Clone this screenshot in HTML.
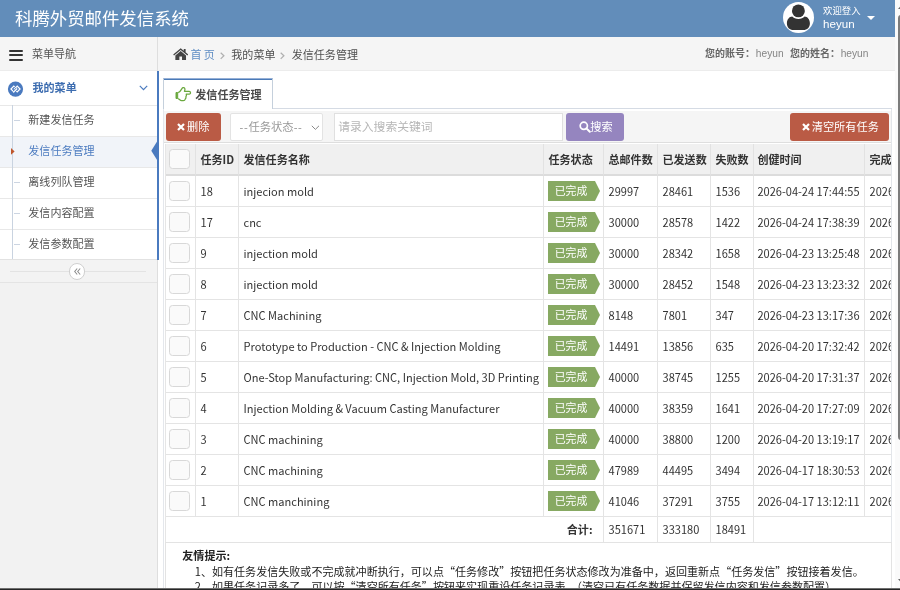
<!DOCTYPE html>
<html lang="zh-CN">
<head>
<meta charset="utf-8">
<title>科腾外贸邮件发信系统</title>
<style>
*{box-sizing:border-box;}
html,body{margin:0;padding:0;}
body{width:900px;height:590px;overflow:hidden;position:relative;background:#fff;
  font-family:"Liberation Sans","Noto Sans CJK SC",sans-serif;font-size:11.05px;color:#393939;}
#page{will-change:transform;position:absolute;left:0;top:0;width:895px;height:588px;overflow:hidden;background:#fff;}
.a{position:absolute;white-space:nowrap;}
/* header */
#navbar{position:absolute;left:0;top:0;width:895px;height:37px;background:#628dba;}
#navbar .brand{left:15px;top:0;height:37px;line-height:38px;color:#fff;font-size:17.4px;}
#navbar .avatar{left:783px;top:2px;width:31px;height:31px;border-radius:50%;background:#fff;overflow:hidden;}
#navbar .welcome{left:823px;top:5px;color:#fff;font-size:9.4px;line-height:12px;}
#navbar .uname{left:823px;top:15.5px;color:#fff;font-size:11.6px;line-height:16px;}
#navbar .caret{left:867.2px;top:15.6px;width:0;height:0;border-left:4.4px solid transparent;border-right:4.4px solid transparent;border-top:4.6px solid #fff;}
/* sidebar */
#sidebar{position:absolute;left:0;top:37px;width:158px;height:551px;background:#f2f2f2;border-right:1px solid #dedede;}
#sidebar .navhead{left:0;top:0;width:157px;height:34px;background:#f5f5f5;border-bottom:1px solid #ececec;}
#sidebar .navhead .txt{left:32px;top:0;line-height:35px;color:#555;font-size:11px}
#sidebar .burger{left:9px;top:13px;width:13.5px;height:11px;}
#sidebar .burger i{display:block;height:2px;background:#333;margin-bottom:2.4px;border-radius:1px;}
#sidebar .mymenu{left:0;top:34px;width:157px;height:34px;background:#fff;}
#sidebar .mymenu .txt{left:32.5px;top:0;line-height:35px;font-weight:bold;color:#3d6db0;}
#sidebar .sub{left:0;width:157px;height:31px;background:#fff;border-top:1px solid #e8e8e8;}
#sidebar .sub .txt{left:28.3px;top:0;line-height:29px;color:#555;}
#sidebar .sub.active{background:#f1f4f9;}
#sidebar .sub.active .txt{color:#4d7cc0;}
#sidebar .sub .dash{left:14px;top:14px;width:6px;height:1px;background:#ccd5e2;}
#sidebar .vline{left:12px;top:68px;width:1px;height:154px;background:#c9d3e0;}
#sidebar .rblue{left:157px;top:34px;width:2px;height:189px;background:#4a7abf;}
#sidebar .collapse{left:0;top:222px;width:157px;height:24px;background:#f3f3f3;border-top:1px solid #e2e2e2;border-bottom:1px solid #e4e4e4;}
/* breadcrumb */
#crumbs{position:absolute;left:158px;top:37px;width:737px;height:34px;background:#f5f5f5;border-bottom:1px solid #ececec;}
#crumbs .t{top:0;line-height:36px;}
/* tabs */
#tabline{left:163px;top:108px;width:729px;height:1px;background:#d5dbe4;}
#tab{left:162.5px;top:78px;width:110px;height:31px;background:#fff;border:1px solid #c5d0dc;border-top:1px solid #96b0d6;border-bottom:none;box-shadow:inset 0 1px 0 #4a7ab8;}
#tab .txt{left:31.8px;top:1.4px;line-height:30px;font-weight:bold;color:#4a4a4a;}
/* toolbar */
#toolbar{left:163.5px;top:111px;width:727.5px;height:32px;background:#f5f5f5;border-bottom:1px solid #dedede;}
.btn{position:absolute;color:#fff;border-radius:3px;white-space:nowrap;top:112.5px;height:28.5px;line-height:28.5px;font-size:11.2px;}
.btn .a{top:0;}
/* table */
#grid{left:165px;top:144px;width:725.5px;height:399px;overflow:hidden;font-family:"Noto Sans CJK SC","Liberation Sans",sans-serif;font-size:11.05px;color:#333;border-left:1px solid #e6e6e6;}
table{border-collapse:separate;border-spacing:0;table-layout:fixed;width:769px;margin-left:-1px;}
td,th{border-left:1px solid #e4e4e4;border-bottom:1px solid #e4e4e4;height:31px;padding:0 0 0 4.5px;text-align:left;white-space:nowrap;overflow:hidden;vertical-align:middle;line-height:29px;}
th{font-weight:bold;background:#f0f0f0;color:#333;height:32px;border-bottom:2px solid #dcdcdc;border-left-color:#e2e2e2;}
.cb{display:block;width:20.4px;height:20.4px;border:1px solid #d8d8d8;border-radius:3.5px;background:#fafafa;margin-left:-1.4px;}
.tag{display:block;position:relative;width:46.8px;height:20.4px;line-height:19.5px;background:#87a962;color:#fff;padding:0 0 0 6.6px;font-size:10.9px;margin-left:-0.4px;}
.tag:after{content:"";position:absolute;right:-5px;top:0;border-left:5px solid #87a962;border-top:10.2px solid transparent;border-bottom:10.2px solid transparent;}
td:nth-child(8),th:nth-child(8){padding-left:3.4px}
tr.total td{height:25px;line-height:25px;}
/* tips */
#tips{left:164.5px;top:542px;width:727px;height:60px;border:1px solid #e3e3e3;font-family:"Noto Sans CJK SC","Liberation Sans",sans-serif;color:#222;}
/* scrollbar */
#sb{left:895px;top:0;width:5px;height:588px;background:#fafafa;}
#sb .thumb{left:3.3px;top:15.3px;width:8px;height:424.3px;background:#7c7c7c;border-radius:3px 0 0 3px;}
#bottomline{left:0;top:588px;width:900px;height:2px;background:#262626;border-top:1px solid #6f6f6f;}
</style>
</head>
<body>
<div id="page">

<div id="navbar">
  <div class="a brand">科腾外贸邮件发信系统</div>
  <div class="a avatar"><svg width="31" height="31" viewBox="0 0 31 31"><circle cx="15.4" cy="8.9" r="6.45" fill="#333"/><path d="M9.2 14.6 C6.5 14.8 4 17.2 3.9 21.2 C3.9 25.2 6.5 28 10.5 28 L20.3 28 C24.3 28 26.9 25.2 26.9 21.2 C26.8 17.2 24.3 14.8 21.6 14.6 C20.2 16.1 18 17 15.4 17 C12.8 17 10.6 16.1 9.2 14.6 Z" fill="#333"/></svg></div>
  <div class="a welcome">欢迎登入</div>
  <div class="a uname">heyun</div>
  <div class="a caret"></div>
</div>

<div id="sidebar">
  <div class="a navhead"><div class="a burger"><i></i><i></i><i></i></div><div class="a txt">菜单导航</div></div>
  <div class="a mymenu">
    <svg class="a" style="left:7px;top:10px" width="17" height="17" viewBox="0 0 17 17"><circle cx="8.5" cy="8.1" r="7.6" fill="#4a7abf"/><g transform="translate(0.5,0.1)" fill="none" stroke="#fff" stroke-width="1.25" stroke-linejoin="miter"><path d="M6.3 5.05 L3.45 7.9 L6.3 10.75 L9.15 7.9 Z"/><path d="M9.7 5.05 L6.85 7.9 L9.7 10.75 L12.55 7.9 Z" stroke="#4a7abf" stroke-width="2.6"/><path d="M9.7 5.05 L6.85 7.9 L9.7 10.75 L12.55 7.9 Z"/><path d="M9.15 7.9 L6.3 10.75" stroke="#4a7abf" stroke-width="2.6"/><path d="M9.6 7.45 L6.3 10.75 L5.8 10.25"/></g></svg>
    <div class="a txt">我的菜单</div>
    <svg class="a" style="left:138.5px;top:13.8px" width="9" height="6" viewBox="0 0 9 6"><path d="M0.8 0.8 L4.5 4.6 L8.2 0.8" fill="none" stroke="#4a7abf" stroke-width="1.2"/></svg>
  </div>
  <div class="a sub" style="top:68px"><span class="a dash"></span><div class="a txt">新建发信任务</div></div>
  <div class="a sub active" style="top:99px"><div class="a txt">发信任务管理</div></div>
  <div class="a sub" style="top:130px"><span class="a dash"></span><div class="a txt">离线列队管理</div></div>
  <div class="a sub" style="top:161px"><span class="a dash"></span><div class="a txt">发信内容配置</div></div>
  <div class="a sub" style="top:192px"><span class="a dash"></span><div class="a txt">发信参数配置</div></div>
  <div class="a vline"></div>
  <svg class="a" style="left:10.5px;top:110.5px" width="4" height="7" viewBox="0 0 4 7"><path d="M0 0 L3.6 3.4 L0 6.8 Z" fill="#c0562b"/></svg>
  <svg class="a" style="left:150.5px;top:102.5px" width="7" height="22" viewBox="0 0 7 22"><path d="M7 0 L0.3 10.8 L7 21.6 Z" fill="#4a7abf"/></svg>
  <div class="a rblue"></div>
  <div class="a collapse">
    <div class="a" style="left:9.5px;top:11px;width:136px;height:1px;background:#e3e3e3"></div>
    <div class="a" style="left:68.5px;top:3px;width:16.5px;height:16.5px;border-radius:50%;border:1px solid #d0d0d0;background:#fff"></div>
    <svg class="a" style="left:73.5px;top:8.2px" width="7" height="7" viewBox="0 0 7 7"><path d="M3.2 0.5 L0.7 3.5 L3.2 6.5 M6.2 0.5 L3.7 3.5 L6.2 6.5" fill="none" stroke="#8c8c8c" stroke-width="1.05"/></svg>
  </div>
</div>

<div id="crumbs">
  <svg class="a" style="left:14.5px;top:11px" width="15.4" height="12.4" viewBox="0 0 15 12"><path d="M7.5 0.3 L0.2 6.3 L1 7.2 L7.5 1.9 L14 7.2 L14.8 6.3 L12.3 4.2 L12.3 1 L10.5 1 L10.5 2.7 Z" fill="#444"/><path d="M7.5 2.9 L2.3 7.2 L2.3 11.7 L6.2 11.7 L6.2 8.3 L8.8 8.3 L8.8 11.7 L12.7 11.7 L12.7 7.2 Z" fill="#444"/></svg>
  <div class="a t" style="left:32.6px;color:#5f8dc4;word-spacing:-1px">首 页</div>
  <svg class="a" style="left:62px;top:14.5px" width="5" height="8" viewBox="0 0 5 8"><path d="M0.7 0.7 L3.9 3.8 L0.7 6.9" fill="none" stroke="#b0b0b0" stroke-width="1.25"/></svg>
  <div class="a t" style="left:73.3px;color:#4f4f4f">我的菜单</div>
  <svg class="a" style="left:122.3px;top:14.5px" width="5" height="8" viewBox="0 0 5 8"><path d="M0.7 0.7 L3.9 3.8 L0.7 6.9" fill="none" stroke="#b0b0b0" stroke-width="1.25"/></svg>
  <div class="a t" style="left:133.7px;color:#4f4f4f">发信任务管理</div>
  <div class="a t" style="left:547px;color:#666;font-weight:bold;font-size:10px;line-height:34.4px">您的账号：</div>
  <div class="a t" style="left:597.8px;color:#858585;font-size:10.2px;line-height:34.4px">heyun</div>
  <div class="a t" style="left:632px;color:#666;font-weight:bold;font-size:10px;line-height:34.4px">您的姓名：</div>
  <div class="a t" style="left:682.7px;color:#858585;font-size:10.2px;line-height:34.4px">heyun</div>
</div>

<div class="a" id="tabline"></div>
<div class="a" style="left:162.5px;top:109px;width:1px;height:480px;background:#e4e7ec"></div>
<div class="a" style="left:891px;top:109px;width:1px;height:480px;background:#e3e6ea"></div>
<div class="a" id="tab">
  <svg class="a" style="left:11.3px;top:7.7px" width="17" height="15" viewBox="0 0 17 15"><path d="M1 5.5 L2.7 5.5 L2.7 11.5 L1 11.5 Z" fill="#6aa83e" stroke="#6aa83e" stroke-width="1"/><path d="M3.2 5.6 C5.2 4.8 6.4 2.6 7.2 1.2 C7.9 0.2 9.6 0.5 9.9 1.8 C10.1 2.8 9.7 3.6 9.4 4.3 L14.2 4.3 C15.9 4.3 16 7 14.2 7 L11.2 7 C11.6 8.2 11.3 9.2 10.9 9.7 C11.1 11 10.6 11.9 10.1 12.3 C10 13.3 9.2 13.7 8.3 13.7 L6.6 13.7 C5.2 13.7 4.4 12.2 3.2 11.6" fill="none" stroke="#6aa83e" stroke-width="1.25" stroke-linejoin="round"/></svg>
  <div class="a txt">发信任务管理</div>
</div>
<div class="a" id="toolbar"></div>
<div class="btn" style="left:166px;width:55px;background:#ba5b45;"><svg class="a" style="left:10.8px;top:10.3px" width="8" height="8" viewBox="0 0 8 8"><path d="M1 1 L7 7 M7 1 L1 7" stroke="#fff" stroke-width="2.2" fill="none"/></svg><span class="a" style="left:21px">删除</span></div>
<div class="a" style="left:230px;top:112.5px;width:92.5px;height:28.5px;background:#fff;border:1px solid #e3e3e3;border-radius:2px;">
  <div class="a" style="left:8.5px;top:0;line-height:27.5px;font-size:11.3px;color:#9a9a9a"><span style="letter-spacing:0.7px">--</span>任务状态<span style="letter-spacing:0.7px">--</span></div>
  <svg class="a" style="left:80px;top:11px" width="9" height="6" viewBox="0 0 9 6"><path d="M0.8 0.8 L4.4 4.4 L8 0.8" fill="none" stroke="#888" stroke-width="1"/></svg>
</div>
<div class="a" style="left:333.5px;top:112.5px;width:229.5px;height:28.5px;background:#fff;border:1px solid #e0e0e0;">
  <div class="a" style="left:3.7px;top:0;line-height:27.6px;font-size:11.8px;color:#b6b6b6">请录入搜索关键词</div>
</div>
<div class="btn" style="left:565.5px;width:58px;background:#9585bf;">
  <svg class="a" style="left:13px;top:8.5px" width="12" height="12" viewBox="0 0 12 12"><circle cx="4.8" cy="4.8" r="3.6" fill="none" stroke="#fff" stroke-width="1.7"/><path d="M7.4 7.4 L10.8 10.8" stroke="#fff" stroke-width="2" stroke-linecap="round"/></svg>
  <span class="a" style="left:24.7px">搜索</span></div>
<div class="btn" style="left:790px;width:99.3px;background:#ba5b45;"><svg class="a" style="left:11.6px;top:10.3px" width="8" height="8" viewBox="0 0 8 8"><path d="M1 1 L7 7 M7 1 L1 7" stroke="#fff" stroke-width="2.2" fill="none"/></svg><span class="a" style="left:21.7px">清空所有任务</span></div>

<div class="a" id="grid">
<table>
<colgroup><col style="width:30px"><col style="width:43px"><col style="width:305px"><col style="width:60px"><col style="width:54px"><col style="width:53px"><col style="width:43px"><col style="width:111px"><col style="width:70px"></colgroup>
<tr><th class="c0"><span class="cb"></span></th><th>任务ID</th><th>发信任务名称</th><th>任务状态</th><th>总邮件数</th><th>已发送数</th><th>失败数</th><th>创健时间</th><th>完成时间</th></tr>
<tr><td class="c0"><span class="cb"></span></td><td>18</td><td>injecion mold</td><td><span class="tag">已完成</span></td><td>29997</td><td>28461</td><td>1536</td><td>2026-04-24 17:44:55</td><td>2026-04-25</td></tr>
<tr><td class="c0"><span class="cb"></span></td><td>17</td><td>cnc</td><td><span class="tag">已完成</span></td><td>30000</td><td>28578</td><td>1422</td><td>2026-04-24 17:38:39</td><td>2026-04-25</td></tr>
<tr><td class="c0"><span class="cb"></span></td><td>9</td><td>injection mold</td><td><span class="tag">已完成</span></td><td>30000</td><td>28342</td><td>1658</td><td>2026-04-23 13:25:48</td><td>2026-04-24</td></tr>
<tr><td class="c0"><span class="cb"></span></td><td>8</td><td>injection mold</td><td><span class="tag">已完成</span></td><td>30000</td><td>28452</td><td>1548</td><td>2026-04-23 13:23:32</td><td>2026-04-24</td></tr>
<tr><td class="c0"><span class="cb"></span></td><td>7</td><td>CNC Machining</td><td><span class="tag">已完成</span></td><td>8148</td><td>7801</td><td>347</td><td>2026-04-23 13:17:36</td><td>2026-04-23</td></tr>
<tr><td class="c0"><span class="cb"></span></td><td>6</td><td>Prototype to Production - CNC &amp; Injection Molding</td><td><span class="tag">已完成</span></td><td>14491</td><td>13856</td><td>635</td><td>2026-04-20 17:32:42</td><td>2026-04-21</td></tr>
<tr><td class="c0"><span class="cb"></span></td><td>5</td><td>One-Stop Manufacturing: CNC, Injection Mold, 3D Printing</td><td><span class="tag">已完成</span></td><td>40000</td><td>38745</td><td>1255</td><td>2026-04-20 17:31:37</td><td>2026-04-21</td></tr>
<tr><td class="c0"><span class="cb"></span></td><td>4</td><td>Injection Molding &amp; Vacuum Casting Manufacturer</td><td><span class="tag">已完成</span></td><td>40000</td><td>38359</td><td>1641</td><td>2026-04-20 17:27:09</td><td>2026-04-21</td></tr>
<tr><td class="c0"><span class="cb"></span></td><td>3</td><td>CNC machining</td><td><span class="tag">已完成</span></td><td>40000</td><td>38800</td><td>1200</td><td>2026-04-20 13:19:17</td><td>2026-04-21</td></tr>
<tr><td class="c0"><span class="cb"></span></td><td>2</td><td>CNC machining</td><td><span class="tag">已完成</span></td><td>47989</td><td>44495</td><td>3494</td><td>2026-04-17 18:30:53</td><td>2026-04-18</td></tr>
<tr><td class="c0"><span class="cb"></span></td><td>1</td><td>CNC manchining</td><td><span class="tag">已完成</span></td><td>41046</td><td>37291</td><td>3755</td><td>2026-04-17 13:12:11</td><td>2026-04-18</td></tr>
<tr class="total"><td colspan="4" style="text-align:right;padding-right:10.5px;font-weight:bold;border-left:none">合计:</td><td>351671</td><td>333180</td><td>18491</td><td colspan="2"></td></tr>
</table>
</div>

<div class="a" id="tips">
  <div class="a" style="left:16.8px;top:3.7px;line-height:16px;font-weight:bold">友情提示:</div>
  <div class="a" style="left:29.3px;top:19.5px;line-height:16px">1、如有任务发信失败或不完成就冲断执行，可以点“任务修改”按钮把任务状态修改为准备中，返回重新点“任务发信”按钮接着发信。</div>
  <div class="a" style="left:29.3px;top:35px;line-height:16px">2、如果任务记录多了，可以按“清空所有任务”按钮来实现重设任务记录表。（清空已有任务数据并保留发信内容和发信参数配置）</div>
</div>
</div>
<div class="a" id="sb"><div class="a thumb"></div>
  <svg class="a" style="left:2.5px;top:4.5px" width="4" height="4" viewBox="0 0 4 4"><path d="M0 4 L3.5 0 L7 4 Z" fill="#6a6a6a"/></svg>
  <svg class="a" style="left:2.5px;top:579px" width="4" height="4" viewBox="0 0 4 4"><path d="M0 0 L3.5 4 L7 0 Z" fill="#6a6a6a"/></svg>
</div>
<div class="a" id="bottomline"></div>
</body>
</html>
